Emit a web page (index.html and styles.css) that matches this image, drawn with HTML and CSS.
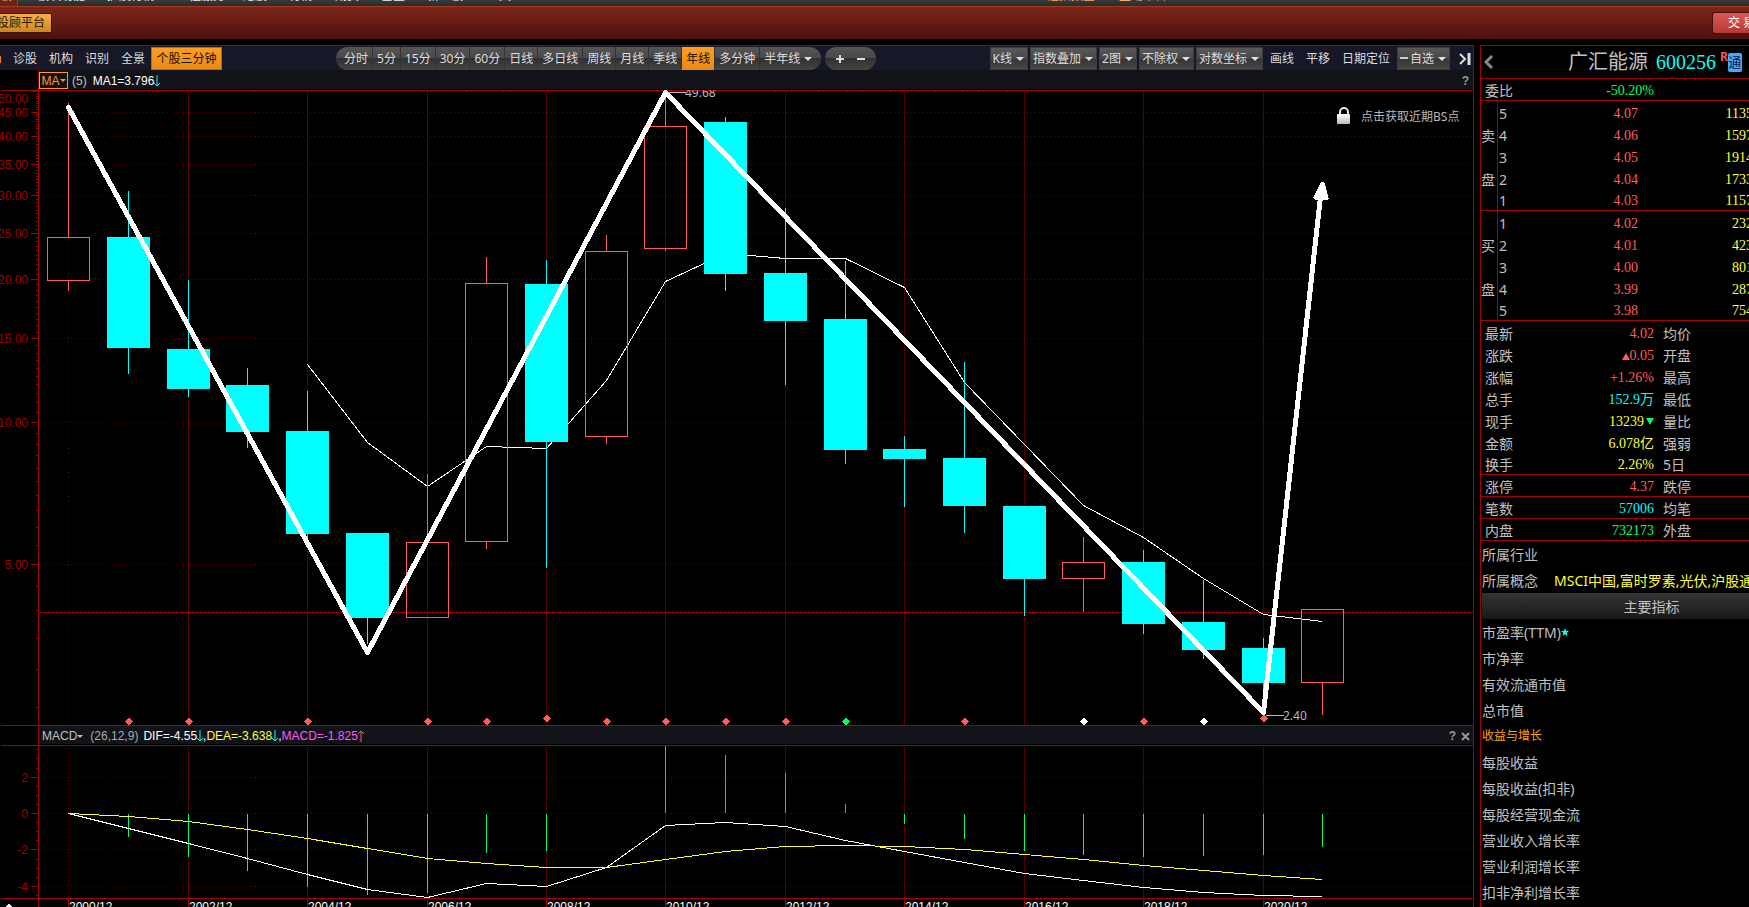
FILE: index.html
```html
<!DOCTYPE html>
<html lang="zh-CN">
<head>
<meta charset="utf-8">
<title>广汇能源 600256</title>
<link rel="stylesheet" href="styles.css">
</head>
<body>
<nav class="menu" aria-label="主菜单">
  <div class="menu-tab">分析</div>
  <div class="menu-items">
    <span class="w4">板块功能</span><span class="w4">扩展行情</span><span class="w4b">个性服务</span><span>港股</span><span>行情</span><span>期货</span><span>基金</span><span class="w3">新三板</span><span>工具</span>
  </div>
  <div class="menu-promo"><span>上证指数查</span><span>互动平台</span></div>
</nav>
<header class="banner">
  <button class="advisor" type="button">投顾平台</button>
  <button class="trade" type="button">交 易</button>
</header>
<main class="workspace">
  <section class="charts">
    <div class="toolbar">
      <i class="edge-mark"></i>
      <div class="tools-left">
        <button type="button">诊股</button><button type="button">机构</button><button type="button">识别</button><button type="button">全景</button><button type="button" class="hot">个股三分钟</button>
      </div>
      <div class="periods">
        <button type="button">分时</button><button type="button">5分</button><button type="button">15分</button><button type="button">30分</button><button type="button">60分</button><button type="button">日线</button><button type="button">多日线</button><button type="button">周线</button><button type="button">月线</button><button type="button">季线</button><button type="button" class="active">年线</button><button type="button">多分钟</button><button type="button">半年线<i class="caret"></i></button>
      </div>
      <div class="zoomer">
        <button type="button" aria-label="放大"><svg width="8" height="8" viewBox="0 0 8 8"><path d="M4 0V8M0 4H8" stroke="#ddd" stroke-width="2"/></svg></button>
        <button type="button" aria-label="缩小"><svg width="8" height="8" viewBox="0 0 8 8"><path d="M0 4H8" stroke="#ddd" stroke-width="2"/></svg></button>
      </div>
      <div class="tools-right">
        <button type="button" class="drop">K线<i class="caret"></i></button>
        <button type="button" class="drop">指数叠加<i class="caret"></i></button>
        <button type="button" class="drop">2图<i class="caret"></i></button>
        <button type="button" class="drop">不除权<i class="caret"></i></button>
        <button type="button" class="drop">对数坐标<i class="caret"></i></button>
        <button type="button" class="plain">画线</button>
        <button type="button" class="plain">平移</button>
        <button type="button" class="plain">日期定位</button>
        <button type="button" class="drop"><i class="dash"></i>自选<i class="caret"></i></button>
        <button type="button" class="collapse" aria-label="收起"><svg width="12" height="12" viewBox="0 0 12 12" fill="none" stroke="#ddd"><path d="M1 1L6 6L1 11" stroke-width="2"/><path d="M10 0V12" stroke-width="3"/></svg></button>
      </div>
    </div>
    <div class="indicator">
      <button type="button" class="ma-box">MA<i class="caret"></i></button>
      <span class="ma-arg">(5)</span><span class="white">MA1=3.796</span><svg class="arrow cyan" viewBox="0 0 6 12"><path d="M3 0V11M0 8L3 11L6 8"/></svg>
      <button type="button" class="mini push">?</button>
    </div>
    <svg class="plot" id="price" viewBox="0 90 1473 636" role="img" aria-label="年线K线图"></svg>
    <div class="indicator macd-bar">
      <button type="button" class="macd-name">MACD<i class="caret"></i></button>
      <span class="macd-arg">(26,12,9)</span><span class="white">DIF=-4.55</span><svg class="arrow cyan" viewBox="0 0 6 12"><path d="M3 0V11M0 8L3 11L6 8"/></svg><span class="white">,</span><span class="yellow">DEA=-3.638</span><svg class="arrow cyan" viewBox="0 0 6 12"><path d="M3 0V11M0 8L3 11L6 8"/></svg><span class="white">,</span><span class="pink">MACD=-1.825</span><svg class="arrow rise" viewBox="0 0 6 12"><path d="M3 12V1M0 4L3 1L6 4"/></svg>
      <button type="button" class="mini push">?</button>
      <button type="button" class="mini close" aria-label="关闭"><svg width="9" height="9" viewBox="0 0 9 9"><path d="M1 1L8 8M8 1L1 8" stroke="#999" stroke-width="2"/></svg></button>
    </div>
    <svg class="plot" id="macd" viewBox="0 745 1473 162" role="img" aria-label="MACD"></svg>
  </section>

  <aside class="quote">
    <div class="quote-head">
      <button type="button" class="back" aria-label="返回"><svg width="10" height="14" viewBox="0 0 10 14"><path d="M8 1L2 7L8 13" fill="none" stroke="#888" stroke-width="3"/></svg></button>
      <h1>广汇能源</h1><span class="code">600256</span><sup class="flag">R</sup><span class="connect">通</span>
    </div>
    <div class="ratio"><span>委比</span><b class="down">-50.20%</b></div>
    <table class="book">
      <tbody>
        <tr><th></th><td>5</td><td>4.07</td><td>1135</td></tr>
        <tr><th>卖</th><td>4</td><td>4.06</td><td>1597</td></tr>
        <tr><th></th><td>3</td><td>4.05</td><td>1914</td></tr>
        <tr><th>盘</th><td>2</td><td>4.04</td><td>1733</td></tr>
        <tr class="last"><th></th><td>1</td><td>4.03</td><td>1157</td></tr>
        <tr><th></th><td>1</td><td>4.02</td><td>232</td></tr>
        <tr><th>买</th><td>2</td><td>4.01</td><td>423</td></tr>
        <tr><th></th><td>3</td><td>4.00</td><td>801</td></tr>
        <tr><th>盘</th><td>4</td><td>3.99</td><td>287</td></tr>
        <tr class="last"><th></th><td>5</td><td>3.98</td><td>754</td></tr>
      </tbody>
    </table>
    <table class="detail">
      <tbody>
        <tr><th>最新</th><td class="rise">4.02</td><th>均价</th></tr>
        <tr><th>涨跌</th><td class="rise"><i class="tri-up"></i>0.05</td><th>开盘</th></tr>
        <tr><th>涨幅</th><td class="rise">+1.26%</td><th>最高</th></tr>
        <tr><th>总手</th><td class="cyan">152.9万</td><th>最低</th></tr>
        <tr><th>现手</th><td class="yellow">13239<i class="tri-down"></i></td><th>量比</th></tr>
        <tr><th>金额</th><td class="yellow">6.078亿</td><th>强弱</th></tr>
        <tr class="last"><th>换手</th><td class="yellow">2.26%</td><th>5日</th></tr>
        <tr class="last"><th>涨停</th><td class="rise">4.37</td><th>跌停</th></tr>
        <tr class="last"><th>笔数</th><td class="cyan">57006</td><th>均笔</th></tr>
        <tr class="last"><th>内盘</th><td class="down">732173</td><th>外盘</th></tr>
      </tbody>
    </table>
    <div class="belong">所属行业</div>
    <div class="belong">所属概念<span class="yellow concept">MSCI中国,富时罗素,光伏,沪股通</span></div>
    <h2>主要指标</h2>
    <ul class="metrics">
      <li>市盈率(TTM)<svg width="8" height="8" viewBox="0 0 10 10"><path d="M5 0L6.300 3.500L10 3.800L7.200 6L8 10L5 7.800L2 10L2.800 6L0 3.800L3.700 3.500Z" fill="#0ff"/></svg></li>
      <li>市净率</li>
      <li>有效流通市值</li>
      <li>总市值</li>
      <li class="group">收益与增长</li>
      <li>每股收益</li>
      <li>每股收益(扣非)</li>
      <li>每股经营现金流</li>
      <li>营业收入增长率</li>
      <li>营业利润增长率</li>
      <li>扣非净利增长率</li>
    </ul>
  </aside>
</main>
<script src="chart.js"></script>
</body>
</html>
```
FILE: styles.css
```css
* { box-sizing: border-box; }
body {
  margin: 0;
  height: 100vh;
  overflow: hidden;
  display: flex;
  flex-direction: column;
  background: #000;
  color: #c0c0c0;
  font: 12px/16px "Noto Sans", "Noto Sans CJK SC", sans-serif;
}
button {
  margin: 0;
  padding: 0;
  border: 0;
  background: none;
  color: inherit;
  font: inherit;
  white-space: nowrap;
}
.white { color: #fff; }
.cyan { color: #0ff; }
.yellow { color: #ff3; }
.pink { color: #ff55ff; }
.rise { color: #ff5c5c; }
.down { color: #00ff60; }

.menu {
  flex: none;
  display: flex;
  align-items: flex-end;
  height: 6px;
  overflow: hidden;
  background: linear-gradient(#3a3a3a, #2a2a2a);
  color: #eee;
  line-height: 18px;
}
.menu > div { white-space: nowrap; padding-bottom: 1px; }
.menu-tab { width: 18px; background: #6e2215; border-right: 1px solid #a03a20; direction: rtl; overflow: hidden; padding-right: 4px; }
.menu-items { display: flex; gap: 22px; padding-left: 19px; flex: 1; }
.menu-items .w4 { width: 48px; }
.menu-items .w4b { width: 44px; }
.menu-items .w3 { width: 38px; }
.menu-promo { display: flex; gap: 24px; color: #f0b070; margin-right: 582px; }

.banner {
  flex: none;
  display: flex;
  justify-content: space-between;
  align-items: center;
  height: 33px;
  margin-bottom: 6px;
  border-top: 1px solid #a03a20;
  background: linear-gradient(#7e261a, #4c1010);
}
.advisor {
  width: 52px;
  height: 20px;
  border: 1px solid #3a1208;
  border-left: 0;
  border-radius: 0 2px 2px 0;
  background: linear-gradient(#f5b04a, #cf8420);
  color: #2a1404;
  line-height: 18px;
  direction: rtl;
  padding-right: 6px;
  overflow: hidden;
}
.trade {
  width: 37px;
  height: 22px;
  border: 1px solid #48100c;
  border-right: 0;
  border-radius: 3px 0 0 3px;
  background: linear-gradient(#dc5a56, #b53836);
  color: #fff;
  text-align: left;
  padding-left: 15px;
  overflow: hidden;
}

.workspace {
  flex: 1;
  min-height: 0;
  display: grid;
  grid-template-columns: minmax(0, 1fr) 269px;
  gap: 6px;
}
.charts { border-top: 1px solid #a00000; border-right: 1px solid #a00000; overflow: hidden; }

.toolbar {
  display: flex;
  height: 24px;
  padding-top: 1px;
  background: #161827;
  color: #ddd;
}
.edge-mark { width: 1px; height: 7px; margin-top: 9px; background: #f08020; }
.tools-left { display: flex; gap: 12px; padding-left: 12px; }
.tools-left .hot {
  width: 71px;
  margin-left: -6px;
  border: 1px solid #b86a10;
  background: linear-gradient(#ff9e20, #e88a18);
  color: #201000;
}
.periods, .zoomer {
  display: flex;
  overflow: hidden;
  border-radius: 12px;
  background: linear-gradient(#555 0, #484848 50%, #303030 50%, #454545 100%);
}
.periods { margin-left: 114px; padding-left: 4px; }
.periods button { padding: 0 4px; border-left: 1px solid #333; }
.periods button:first-child { border-left: 0; }
.periods .active { background: linear-gradient(#ff9e20, #e88a18); color: #201000; }
.periods button:last-child { padding-right: 9px; }
.zoomer { margin-left: 4px; padding: 0 11px; gap: 13px; }
.zoomer svg { display: block; }
.zoomer button { display: flex; align-items: center; }
.caret {
  display: inline-block;
  margin-left: 4px;
  border: solid transparent;
  border-width: 4px 4px 0;
  border-top-color: currentColor;
  vertical-align: 2px;
}
.tools-right { display: flex; gap: 2px; margin-left: auto; padding-right: 2px; }
.drop {
  padding: 0 3px 0 2px;
  border: 1px solid #3c3c40;
  background: linear-gradient(#585858 0, #484848 50%, #343434 50%, #484848 100%);
}
.dash { display: inline-block; width: 8px; height: 2px; margin-right: 2px; background: #ccc; vertical-align: 4px; }
.plain { padding: 0 5px; }
.collapse { display: flex; align-items: center; margin-left: 7px; }

.indicator {
  display: flex;
  align-items: center;
  height: 20px;
  margin-left: 38px;
  padding-top: 2px;
  padding-right: 3px;
  border-left: 1px solid #a00000;
  border-bottom: 1px solid #000;
  background: #121318;
  font-family: "Liberation Sans", "Noto Sans CJK SC", sans-serif;
}
.ma-box { display: flex; align-items: center; justify-content: center; width: 29px; height: 17px; border: 1px solid #ff9830; color: #ff9830; }
.ma-box .caret, .macd-name .caret { border-width: 3px 3px 0; margin-left: 0; }
.ma-arg { padding: 0 6px 0 4px; }
.macd-bar { height: 19px; }
.macd-name { padding-left: 3px; }
.macd-arg { padding: 0 5px 0 7px; color: #aaa; }
.arrow { width: 6px; height: 12px; fill: none; stroke: currentColor; stroke-width: 1; }
.mini { width: 9px; color: #999; font-weight: bold; }
.mini svg { display: block; }
.close { margin-left: 4px; }
.push { margin-left: auto; }

.plot { display: block; width: 100%; height: auto; overflow: hidden; }
.plot .crisp { shape-rendering: crispEdges; }
.frame { stroke: #a00000; fill: none; }
.grid-solid { stroke: #580000; fill: none; }
.grid-dot { stroke: #6a0000; stroke-dasharray: 1 3; fill: none; }
.last-price { stroke: #a00000; stroke-dasharray: 3 1; }
.axis-text { fill: #a00000; font: 12px "Liberation Sans", sans-serif; text-anchor: end; }
.date-text { fill: #fff; font: 12px "Liberation Sans", sans-serif; }
.mark-text { fill: #b8b8b8; font: 12px "Noto Sans", "Noto Sans CJK SC", sans-serif; }
.mark-line { stroke: #b8b8b8; }
.candle-up { stroke: #ff5c5c; fill: none; }
.candle-down { stroke: #0ff; fill: #0ff; }
.bar-up { stroke: #ff5c5c; }
.bar-down { stroke: #00ff60; }
.line-white { stroke: #fff; fill: none; }
.line-yellow { stroke: #ff3; fill: none; }
.trend { stroke: #fff; stroke-width: 5; stroke-linejoin: round; stroke-linecap: round; fill: none; }
.solid-white { fill: #fff; }
.solid-red { fill: #ff5c5c; }
.solid-green { fill: #00ff60; }

.quote {
  overflow: hidden;
  border-top: 1px solid #a00000;
  border-left: 1px solid #a00000;
  font-size: 14px;
  line-height: 20px;
}
.quote-head {
  display: flex;
  align-items: center;
  height: 33px;
  padding-left: 3px;
  border-bottom: 1px solid #a00000;
}
.back { display: flex; }
.quote-head h1 { margin: 0 8px 0 74px; font-size: 20px; font-weight: normal; line-height: 32px; white-space: nowrap; }
.code { color: #0ff; font: 20px/32px "Liberation Serif", serif; }
.flag { align-self: flex-start; margin: 3px 0 0 4px; color: #ff5050; font-size: 12px; font-weight: bold; line-height: 16px; }
.connect { width: 14px; height: 19px; border-radius: 2px; background: #4aa8ff; color: #001a40; text-align: center; font-size: 13px; line-height: 19px; overflow: hidden; }
.ratio {
  display: flex;
  justify-content: space-between;
  height: 22px;
  padding: 2px 95px 0 4px;
  border-bottom: 1px solid #a00000;
}
.ratio b { font: 14px/20px "Liberation Serif", serif; }
.book, .detail { border-collapse: separate; border-spacing: 0; table-layout: fixed; }
.book { width: calc(100% + 4px); }
.detail { width: 100%; }
.book th, .book td, .detail th, .detail td {
  height: 22px;
  padding: 2px 0 0;
  font-weight: normal;
  line-height: 19px;
  white-space: nowrap;
}
.book .last > *, .detail .last > * { border-bottom: 1px solid #a00000; }
.book th { width: 17px; border-right: 1px solid #a00000; text-align: left; }
.book td { font-family: "Liberation Serif", serif; text-align: right; }
.book td:nth-child(2) { width: 20px; padding-left: 1px; font-family: "Noto Sans", sans-serif; text-align: left; }
.book td:nth-child(3) { width: 120px; color: #ff5c5c; }
.book td:nth-child(4) { color: #ff3; }
.detail th { padding-left: 9px; text-align: left; }
.detail th:first-child { width: 60px; padding-left: 4px; }
.detail td { width: 113px; font-family: "Liberation Serif", "Noto Sans CJK SC", serif; text-align: right; }
.tri-up, .tri-down { display: inline-block; border: 4px solid transparent; }
.tri-up { border-width: 0 4px 7px; border-bottom-color: #ff5c5c; }
.tri-down { border-width: 7px 4px 0; border-top-color: #00ff60; margin-left: 2px; vertical-align: 1px; }
.belong { height: 26px; padding: 4px 0 0 1px; white-space: nowrap; }
.concept { margin-left: 16px; }
.quote h2 {
  margin: 0 0 0 1px;
  padding: 1px 0 0 72px;
  height: 26px;
  background: linear-gradient(#343434, #181818);
  font-size: 14px;
  font-weight: normal;
  line-height: 26px;
  text-align: center;
}
.metrics { margin: 0; padding: 1px 0 0 1px; list-style: none; line-height: 26px; white-space: nowrap; }
.metrics svg { vertical-align: 2px; }
.metrics .group { height: 26px; color: #ffa000; font-size: 12px; line-height: 24px; }
```
FILE: chart.js
```js
const NS = "http://www.w3.org/2000/svg";

function add(parent, name, attrs, text) {
  const el = document.createElementNS(NS, name);
  for (const key in attrs) el.setAttribute(key, attrs[key]);
  if (text !== undefined) el.textContent = text;
  parent.appendChild(el);
  return el;
}
function path(parent, cls, d) { return add(parent, "path", { class: cls, d: d }); }

const xs = [68, 128, 188, 247, 307, 367, 427, 486, 546, 606, 665, 725, 785, 845, 904, 964, 1024, 1083, 1143, 1203, 1263, 1322];

// Each year: direction, body top, body bottom, high, low
const candles = [
  ["up", 237, 280, 102, 290], ["down", 237, 347, 190, 373], ["down", 349, 388, 279, 396],
  ["down", 385, 431, 367, 447], ["down", 431, 533, 390, 540], ["down", 533, 617, 533, 643],
  ["up", 542, 617, 473, 617], ["up", 283, 541, 256, 548], ["down", 284, 441, 259, 567],
  ["up", 251, 436, 234, 443], ["up", 126, 248, 92, 250], ["down", 122, 273, 116, 290],
  ["down", 273, 320, 207, 384], ["down", 319, 449, 260, 463], ["down", 449, 458, 435, 506],
  ["down", 458, 505, 361, 532], ["down", 506, 578, 506, 615], ["up", 562, 578, 536, 611],
  ["down", 562, 623, 549, 633], ["down", 622, 649, 579, 658], ["down", 648, 682, 637, 690],
  ["up", 609, 682, 608, 714]
];
const average = [364, 442, 486, 446, 448, 380, 281, 253, 258, 258, 287, 382, 444, 505, 537, 578, 614, 621];
const bars = [null, 837, 857, 871, 887, 895, 893, 853, 851, null, 745, 754, 772, 803, 824, 839, 851, 855, 857, 856, 855, 847];
const dif = [813, 828, 843, 858, 874, 889, 897, 883, 886, 867, 825, 822, 826, 840, 851, 862, 873, 880, 887, 892, 895, 896];
const dea = [813, 816, 821, 829, 838, 848, 858, 863, 867, 867, 859, 851, 846, 845, 846, 849, 854, 859, 865, 870, 875, 879];

const points = (values, start) => "M" + values.map((y, i) => xs[i + start] + " " + y).join("L");
const priceY = v => Math.round(422 - (v > 10 ? 206.3 : 205.3) * Math.log(v / 10));

function drawPrice() {
  const svg = document.getElementById("price");
  const g = add(svg, "g", { class: "crisp", transform: "translate(0.5 0.5)" });
  const majors = [5, 10, 15, 20, 25, 30, 35, 40, 45];
  majors.forEach(v => path(g, "grid-dot", `M42 ${priceY(v)}H1472`));
  path(g, "grid-dot", "M42 91H1472M68 92V725");
  for (let i = 2; i < xs.length; i += 2) path(g, "grid-solid", `M${xs[i]} 91V724`);
  path(g, "last-price", "M39 612H1472");
  path(g, "frame", "M0 90H1473M0 725H1473M38 90V726M30 91H38");
  let ticks = "";
  for (let v = 2.5; v <= 49; v += 0.5) ticks += `M${majors.includes(v) ? 30 : 35} ${priceY(v)}H38`;
  path(g, "frame", ticks);
  path(g, "line-white", points(average, 4));
  candles.forEach(([dir, top, bottom, high, low], i) => {
    const x = xs[i];
    path(g, "candle-" + dir, `M${x} ${high}V${top}M${x} ${bottom}V${low}M${x - 21} ${top}H${x + 21}V${bottom}H${x - 21}Z`);
  });
  const marks = { 1: "red", 2: "red", 4: "red", 6: "red", 7: "red", 8: "red", 9: "red", 10: "red", 11: "red", 12: "red", 13: "green", 15: "red", 17: "white", 18: "red", 19: "white", 20: "red" };
  for (const i in marks) {
    const y = i === "8" || i === "20" ? 718 : 721;
    path(g, "solid-" + marks[i], `M${xs[i]} ${y - 4}l4 4l-4 4l-4 -4Z`);
  }
  path(g, "trend", "M68 107L367 652L665 92L1263 712L1320 196");
  path(g, "solid-white", "M1320 182Q1322 180 1324 182L1328 198Q1327 200 1325 200L1314 199Q1312 198 1313 196Z");
  path(g, "mark-line", "M667 92H685M1265 715H1283");

  add(svg, "text", { class: "mark-text", x: 685, y: 97 }, "49.68");
  add(svg, "text", { class: "mark-text", x: 1283, y: 720 }, "2.40");
  majors.forEach(v => add(svg, "text", { class: "axis-text", x: 28, y: priceY(v) + 5 }, v.toFixed(2)));
  add(svg, "text", { class: "axis-text", x: 28, y: 103 }, "50.00");

  const defs = add(svg, "linearGradient", { id: "lock", x2: 0, y2: 1 });
  add(defs, "stop", { offset: 0, "stop-color": "#fff" });
  add(defs, "stop", { offset: 1, "stop-color": "#bbb" });
  add(svg, "path", { d: "M1340 116V112a4 4 0 0 1 8 0V116", fill: "none", stroke: "#e8e8e8", "stroke-width": 2 });
  add(svg, "rect", { x: 1337, y: 114, width: 13, height: 10, rx: 1, fill: "url(#lock)" });
  add(svg, "text", { class: "mark-text", x: 1361, y: 121 }, "点击获取近期BS点");
}

function drawMacd() {
  const svg = document.getElementById("macd");
  const g = add(svg, "g", { class: "crisp", transform: "translate(0.5 0.5)" });
  const levels = { 777: "2", 813: "0", 849: "-2", 886: "-4" };
  for (const y in levels) {
    path(g, "grid-dot", `M42 ${y}H1472`);
    path(g, "frame", `M30 ${y}H38`);
    add(svg, "text", { class: "axis-text", x: 28, y: +y + 5 }, levels[y]);
  }
  path(g, "grid-dot", "M68 747V897");
  for (let i = 2; i < xs.length; i += 2) path(g, "grid-solid", `M${xs[i]} 746V897`);
  let ticks = "";
  for (let k = -7; k <= 9; k++) ticks += `M35 ${Math.round(813 + k * 9.1)}H38`;
  path(g, "frame", ticks + "M0 745H1473M0 898H1473M38 745V907");
  bars.forEach((y, i) => {
    if (y) path(g, y < 813 ? "bar-up" : "bar-down", y < 813 ? `M${xs[i]} ${y}V812` : `M${xs[i]} 813V${y - 1}`);
  });
  path(g, "line-white", points(dif, 0));
  path(g, "line-yellow", points(dea, 0));
  for (let i = 0; i < xs.length; i += 2) {
    path(g, "frame", `M${xs[i]} 899V907`);
    add(svg, "text", { class: "date-text", x: xs[i] + 1, y: 911 }, (2000 + i) + "/12");
  }
  path(g, "solid-white", "M8 903L13 908H3Z");
}

drawPrice();
drawMacd();
```
